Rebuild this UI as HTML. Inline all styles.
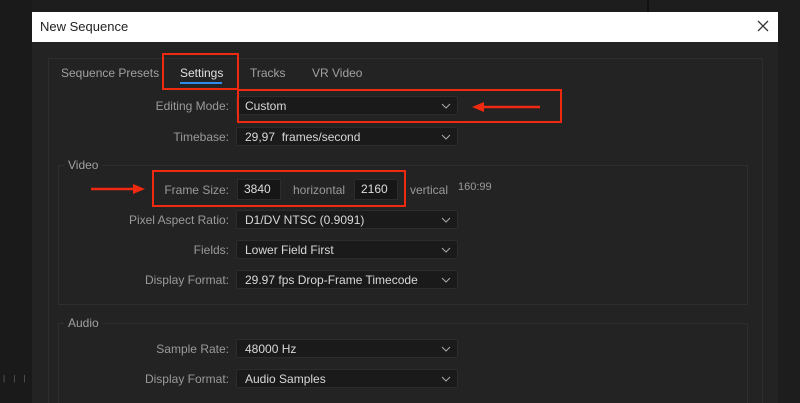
<!DOCTYPE html>
<html><head><style>
html,body{margin:0;width:800px;height:403px;overflow:hidden;}
body{background:#1d1d1d;position:relative;font-family:"Liberation Sans",sans-serif;}
.a{position:absolute}
.lbl{position:absolute;color:#9a9a9a;font-size:12px;text-align:right;width:200px}
.dd{position:absolute;left:236px;width:222px;height:19px;background:#1a1a1a;border:1px solid #2c2c2c;border-radius:2px;color:#d8d8d8;font-size:12px;line-height:18px;box-sizing:border-box;padding-left:8px}
.dd svg{position:absolute;right:6px;top:6px}
.red{position:absolute;border:2.5px solid #f02a10;box-sizing:border-box}
.inp{position:absolute;background:#161616;border:1px solid #2c2c2c;color:#ddd;font-size:12px;line-height:19px;height:21px;box-sizing:border-box;padding-left:6px}
</style></head><body>
<div class="a" style="left:0;top:0;width:32px;height:403px;background:#1a1a1a"></div>
<div class="a" style="left:647px;top:0;width:2px;height:12px;background:#111"></div>
<div class="a" style="left:3px;top:374px;color:#666;font-size:8px;letter-spacing:3px">| | |</div>
<div class="a" style="left:32px;top:12px;width:746px;height:391px;background:#232323"></div>
<div class="a" style="left:32px;top:12px;width:746px;height:30px;background:#fff"></div>
<div class="a" style="left:40px;top:19px;font-size:13px;color:#222">New Sequence</div>
<svg class="a" style="left:757px;top:20px" width="12" height="12"><path d="M1 1L11 11M11 1L1 11" stroke="#333" stroke-width="1.3"/></svg>
<div class="a" style="left:48px;top:58px;width:715px;height:345px;border:1px solid #2e2e2e;border-bottom:none;box-sizing:border-box"></div>
<div class="a" style="left:61px;top:66px;font-size:12px;color:#a0a0a0">Sequence Presets</div>
<div class="a" style="left:180px;top:66px;font-size:12px;color:#e0e0e0">Settings</div>
<div class="a" style="left:180px;top:82px;width:42px;height:2px;background:#2d8ceb"></div>
<div class="a" style="left:250px;top:66px;font-size:12px;color:#a0a0a0">Tracks</div>
<div class="a" style="left:312px;top:66px;font-size:12px;color:#a0a0a0">VR Video</div>

<div class="lbl" style="left:29px;top:99px">Editing Mode:</div>
<div class="dd" style="top:96px">Custom<svg width="10" height="6"><path d="M1 1L5 5L9 1" stroke="#aaa" fill="none"/></svg></div>
<div class="lbl" style="left:29px;top:130px">Timebase:</div>
<div class="dd" style="top:127px">29,97&nbsp; frames/second<svg width="10" height="6"><path d="M1 1L5 5L9 1" stroke="#aaa" fill="none"/></svg></div>

<div class="a" style="left:58px;top:165px;width:690px;height:140px;border:1px solid #2e2e2e;box-sizing:border-box"></div>
<div class="a" style="left:64px;top:158px;padding:0 4px;background:#232323;font-size:12px;color:#a0a0a0">Video</div>
<div class="lbl" style="left:29px;top:183px">Frame Size:</div>
<div class="inp" style="left:237px;top:179px;width:44px">3840</div>
<div class="a" style="left:293px;top:183px;font-size:12px;color:#9a9a9a">horizontal</div>
<div class="inp" style="left:354px;top:179px;width:44px">2160</div>
<div class="a" style="left:410px;top:183px;font-size:12px;color:#9a9a9a">vertical</div>
<div class="a" style="left:458px;top:181px;font-size:11px;color:#9a9a9a">160:99</div>
<div class="lbl" style="left:29px;top:213px">Pixel Aspect Ratio:</div>
<div class="dd" style="top:210px">D1/DV NTSC (0.9091)<svg width="10" height="6"><path d="M1 1L5 5L9 1" stroke="#aaa" fill="none"/></svg></div>
<div class="lbl" style="left:29px;top:243px">Fields:</div>
<div class="dd" style="top:240px">Lower Field First<svg width="10" height="6"><path d="M1 1L5 5L9 1" stroke="#aaa" fill="none"/></svg></div>
<div class="lbl" style="left:29px;top:273px">Display Format:</div>
<div class="dd" style="top:270px">29.97 fps Drop-Frame Timecode<svg width="10" height="6"><path d="M1 1L5 5L9 1" stroke="#aaa" fill="none"/></svg></div>

<div class="a" style="left:58px;top:323px;width:690px;height:90px;border:1px solid #2e2e2e;border-bottom:none;box-sizing:border-box"></div>
<div class="a" style="left:64px;top:316px;padding:0 4px;background:#232323;font-size:12px;color:#a0a0a0">Audio</div>
<div class="lbl" style="left:29px;top:342px">Sample Rate:</div>
<div class="dd" style="top:339px">48000 Hz<svg width="10" height="6"><path d="M1 1L5 5L9 1" stroke="#aaa" fill="none"/></svg></div>
<div class="lbl" style="left:29px;top:372px">Display Format:</div>
<div class="dd" style="top:369px">Audio Samples<svg width="10" height="6"><path d="M1 1L5 5L9 1" stroke="#aaa" fill="none"/></svg></div>

<div class="red" style="left:162px;top:53px;width:77px;height:37px"></div>
<div class="red" style="left:237px;top:89px;width:325px;height:34px"></div>
<div class="red" style="left:152px;top:170px;width:254px;height:37px"></div>
<svg class="a" style="left:0;top:0" width="800" height="403">
<path d="M540 107H482" stroke="#f02a10" stroke-width="2.5"/><path d="M472 107L484 102L484 112Z" fill="#f02a10"/>
<path d="M91 189H135" stroke="#f02a10" stroke-width="2.5"/><path d="M145 189L133 184L133 194Z" fill="#f02a10"/>
</svg>
</body></html>
